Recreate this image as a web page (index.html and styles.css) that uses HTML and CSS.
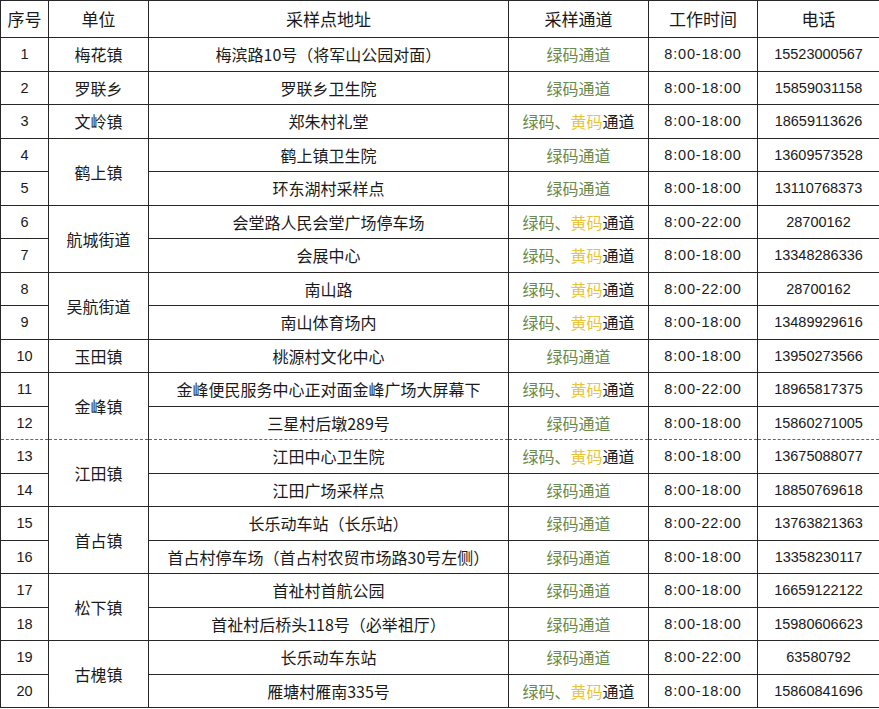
FILE: index.html
```html
<!DOCTYPE html>
<html lang="zh-CN">
<head>
<meta charset="utf-8">
<link rel="stylesheet" href="styles.css">
</head>
<body>
<table class="sites">
<colgroup>
<col class="c-no"><col class="c-unit"><col class="c-addr"><col class="c-chan"><col class="c-time"><col class="c-tel">
</colgroup>
<thead>
<tr><th>序号</th><th>单位</th><th>采样点地址</th><th>采样通道</th><th>工作时间</th><th>电话</th></tr>
</thead>
<tbody>
<tr><td class="num">1</td><td>梅花镇</td><td>梅滨路10号（将军山公园对面）</td><td><span class="g">绿码通道</span></td><td class="time">8:00-18:00</td><td class="num">15523000567</td></tr>
<tr><td class="num">2</td><td>罗联乡</td><td>罗联乡卫生院</td><td><span class="g">绿码通道</span></td><td class="time">8:00-18:00</td><td class="num">15859031158</td></tr>
<tr><td class="num">3</td><td>文岭镇</td><td>郑朱村礼堂</td><td><span class="g">绿码、</span><span class="y">黄码</span>通道</td><td class="time">8:00-18:00</td><td class="num">18659113626</td></tr>
<tr><td class="num">4</td><td rowspan="2">鹤上镇</td><td>鹤上镇卫生院</td><td><span class="g">绿码通道</span></td><td class="time">8:00-18:00</td><td class="num">13609573528</td></tr>
<tr><td class="num">5</td><td>环东湖村采样点</td><td><span class="g">绿码通道</span></td><td class="time">8:00-18:00</td><td class="num">13110768373</td></tr>
<tr><td class="num">6</td><td rowspan="2">航城街道</td><td>会堂路人民会堂广场停车场</td><td><span class="g">绿码、</span><span class="y">黄码</span>通道</td><td class="time">8:00-22:00</td><td class="num">28700162</td></tr>
<tr><td class="num">7</td><td>会展中心</td><td><span class="g">绿码、</span><span class="y">黄码</span>通道</td><td class="time">8:00-18:00</td><td class="num">13348286336</td></tr>
<tr><td class="num">8</td><td rowspan="2">吴航街道</td><td>南山路</td><td><span class="g">绿码、</span><span class="y">黄码</span>通道</td><td class="time">8:00-22:00</td><td class="num">28700162</td></tr>
<tr><td class="num">9</td><td>南山体育场内</td><td><span class="g">绿码、</span><span class="y">黄码</span>通道</td><td class="time">8:00-18:00</td><td class="num">13489929616</td></tr>
<tr><td class="num">10</td><td>玉田镇</td><td>桃源村文化中心</td><td><span class="g">绿码通道</span></td><td class="time">8:00-18:00</td><td class="num">13950273566</td></tr>
<tr><td class="num">11</td><td rowspan="2" class="dash-b">金峰镇</td><td>金峰便民服务中心正对面金峰广场大屏幕下</td><td><span class="g">绿码、</span><span class="y">黄码</span>通道</td><td class="time">8:00-22:00</td><td class="num">18965817375</td></tr>
<tr class="dash-row-b"><td class="num">12</td><td>三星村后墩289号</td><td><span class="g">绿码通道</span></td><td class="time">8:00-18:00</td><td class="num">15860271005</td></tr>
<tr class="dash-row-t"><td class="num">13</td><td rowspan="2">江田镇</td><td>江田中心卫生院</td><td><span class="g">绿码、</span><span class="y">黄码</span>通道</td><td class="time">8:00-18:00</td><td class="num">13675088077</td></tr>
<tr><td class="num">14</td><td>江田广场采样点</td><td><span class="g">绿码通道</span></td><td class="time">8:00-18:00</td><td class="num">18850769618</td></tr>
<tr><td class="num">15</td><td rowspan="2">首占镇</td><td>长乐动车站（长乐站）</td><td><span class="g">绿码通道</span></td><td class="time">8:00-22:00</td><td class="num">13763821363</td></tr>
<tr><td class="num">16</td><td>首占村停车场（首占村农贸市场路30号左侧）</td><td><span class="g">绿码通道</span></td><td class="time">8:00-18:00</td><td class="num">13358230117</td></tr>
<tr><td class="num">17</td><td rowspan="2">松下镇</td><td>首祉村首航公园</td><td><span class="g">绿码通道</span></td><td class="time">8:00-18:00</td><td class="num">16659122122</td></tr>
<tr><td class="num">18</td><td>首祉村后桥头118号（必举祖厅）</td><td><span class="g">绿码通道</span></td><td class="time">8:00-18:00</td><td class="num">15980606623</td></tr>
<tr><td class="num">19</td><td rowspan="2">古槐镇</td><td>长乐动车东站</td><td><span class="g">绿码通道</span></td><td class="time">8:00-22:00</td><td class="num">63580792</td></tr>
<tr><td class="num">20</td><td>雁塘村雁南335号</td><td><span class="g">绿码、</span><span class="y">黄码</span>通道</td><td class="time">8:00-18:00</td><td class="num">15860841696</td></tr>
</tbody>
</table>
</body>
</html>
```
FILE: styles.css
```css
html, body {
  margin: 0;
  padding: 0;
  background: #ffffff;
}
body {
  font-family: "Noto Sans CJK SC", "Noto Sans", sans-serif;
  color: #1a1a1a;
}
.sites {
  border-collapse: collapse;
  table-layout: fixed;
  width: 879px;
  margin-top: 0;
}
.c-no { width: 48px; }
.c-unit { width: 100px; }
.c-addr { width: 360px; }
.c-chan { width: 140px; }
.c-time { width: 109px; }
.c-tel { width: 122px; }
.sites th, .sites td {
  border: 1px solid #262626;
  text-align: center;
  vertical-align: middle;
  padding: 0;
  white-space: nowrap;
  overflow: hidden;
}
.sites th {
  height: 36px;
  font-size: 17px;
  font-weight: normal;
  line-height: 20px;
}
.sites td {
  height: 32.5px;
  font-size: 16px;
  line-height: 20px;
}
.sites td.num {
  font-family: "Liberation Sans", Arial, sans-serif;
  font-size: 14.5px;
}
.sites td.time {
  font-family: "Liberation Sans", Arial, sans-serif;
  font-size: 14.5px;
  letter-spacing: 0.8px;
}
.sites tr.dash-row-b td,
.sites td.dash-b {
  border-bottom: 1px dashed #666666;
}
.sites tr.dash-row-t td {
  border-top: 1px dashed #666666;
}
.g { color: #6a8a4c; }
.y { color: #e9c43a; }
```
